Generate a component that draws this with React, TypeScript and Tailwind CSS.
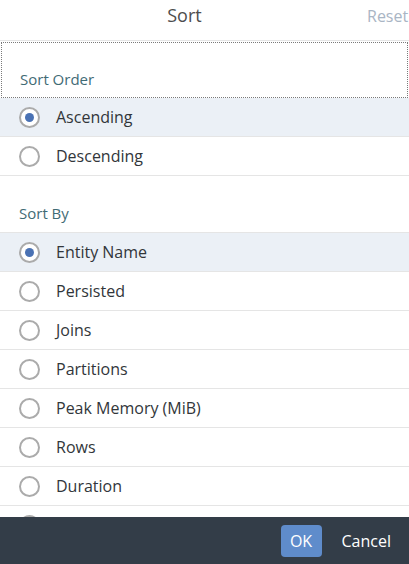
import { useState } from "react";

const orderOptions = ["Ascending", "Descending"];
const sortByOptions = [
  "Entity Name",
  "Persisted",
  "Joins",
  "Partitions",
  "Peak Memory (MiB)",
  "Rows",
  "Duration",
];

function Radio({ checked }: { checked: boolean }) {
  return (
    <span className="flex h-[21px] w-[21px] shrink-0 items-center justify-center rounded-full border-2 border-[#ababab] bg-white">
      {checked && <span className="h-[9px] w-[9px] rounded-full bg-[#4a72b4]" />}
    </span>
  );
}

function OptionRow({
  label,
  checked,
  onSelect,
}: {
  label?: string;
  checked: boolean;
  onSelect: () => void;
}) {
  return (
    <button
      onClick={onSelect}
      className={
        "flex h-[39px] w-full items-center gap-[16px] border-b border-[#e5e5e5] pl-[19px] text-left text-[16px] text-[#32363a] " +
        (checked ? "bg-[#ebf0f6]" : "bg-white")
      }
    >
      <Radio checked={checked} />
      {label && <span>{label}</span>}
    </button>
  );
}

export default function App() {
  const [order, setOrder] = useState("Ascending");
  const [sortBy, setSortBy] = useState("Entity Name");

  return (
    <div
      className="flex h-[564px] w-[409px] flex-col overflow-hidden bg-white"
      style={{ fontFamily: '"Open Sans", "Noto Sans", sans-serif' }}
    >
      {/* Header */}
      <div className="flex h-[41px] shrink-0 items-start border-b border-[#e5e5e5] pt-[2px]">
        <h1 className="flex-1 pl-[2px] text-center text-[18px] leading-[26px] text-[#4d4d4d]">Sort</h1>
        <button className="w-[42px] pt-[2px] text-left text-[16px] leading-[24px] text-[#a9b5c4]">
          Reset
        </button>
      </div>

      {/* Content */}
      <div className="flex-1 overflow-hidden">
        <div className="mx-[1px] mt-[1px] flex h-[56px] items-end border border-dotted border-[#7a7a7a] pb-[7px] pl-[18px]">
          <span className="text-[15px] text-[#3f6b75]">Sort Order</span>
        </div>
        {orderOptions.map((o) => (
          <OptionRow key={o} label={o} checked={order === o} onSelect={() => setOrder(o)} />
        ))}

        <div className="flex h-[57px] items-end border-b border-[#e5e5e5] pb-[8px] pl-[19px]">
          <span className="text-[15px] text-[#3f6b75]">Sort By</span>
        </div>
        {sortByOptions.map((o) => (
          <OptionRow key={o} label={o} checked={sortBy === o} onSelect={() => setSortBy(o)} />
        ))}
        <OptionRow checked={false} onSelect={() => {}} />
      </div>

      {/* Footer */}
      <div className="flex h-[47px] shrink-0 items-center justify-end gap-[8px] bg-[#333d48] pr-[6px]">
        <button className="h-[32px] w-[41px] rounded-[4px] bg-[#5f8ccb] text-[16px] text-white">OK</button>
        <button className="h-[32px] px-[12px] text-[16px] text-white">Cancel</button>
      </div>
    </div>
  );
}
